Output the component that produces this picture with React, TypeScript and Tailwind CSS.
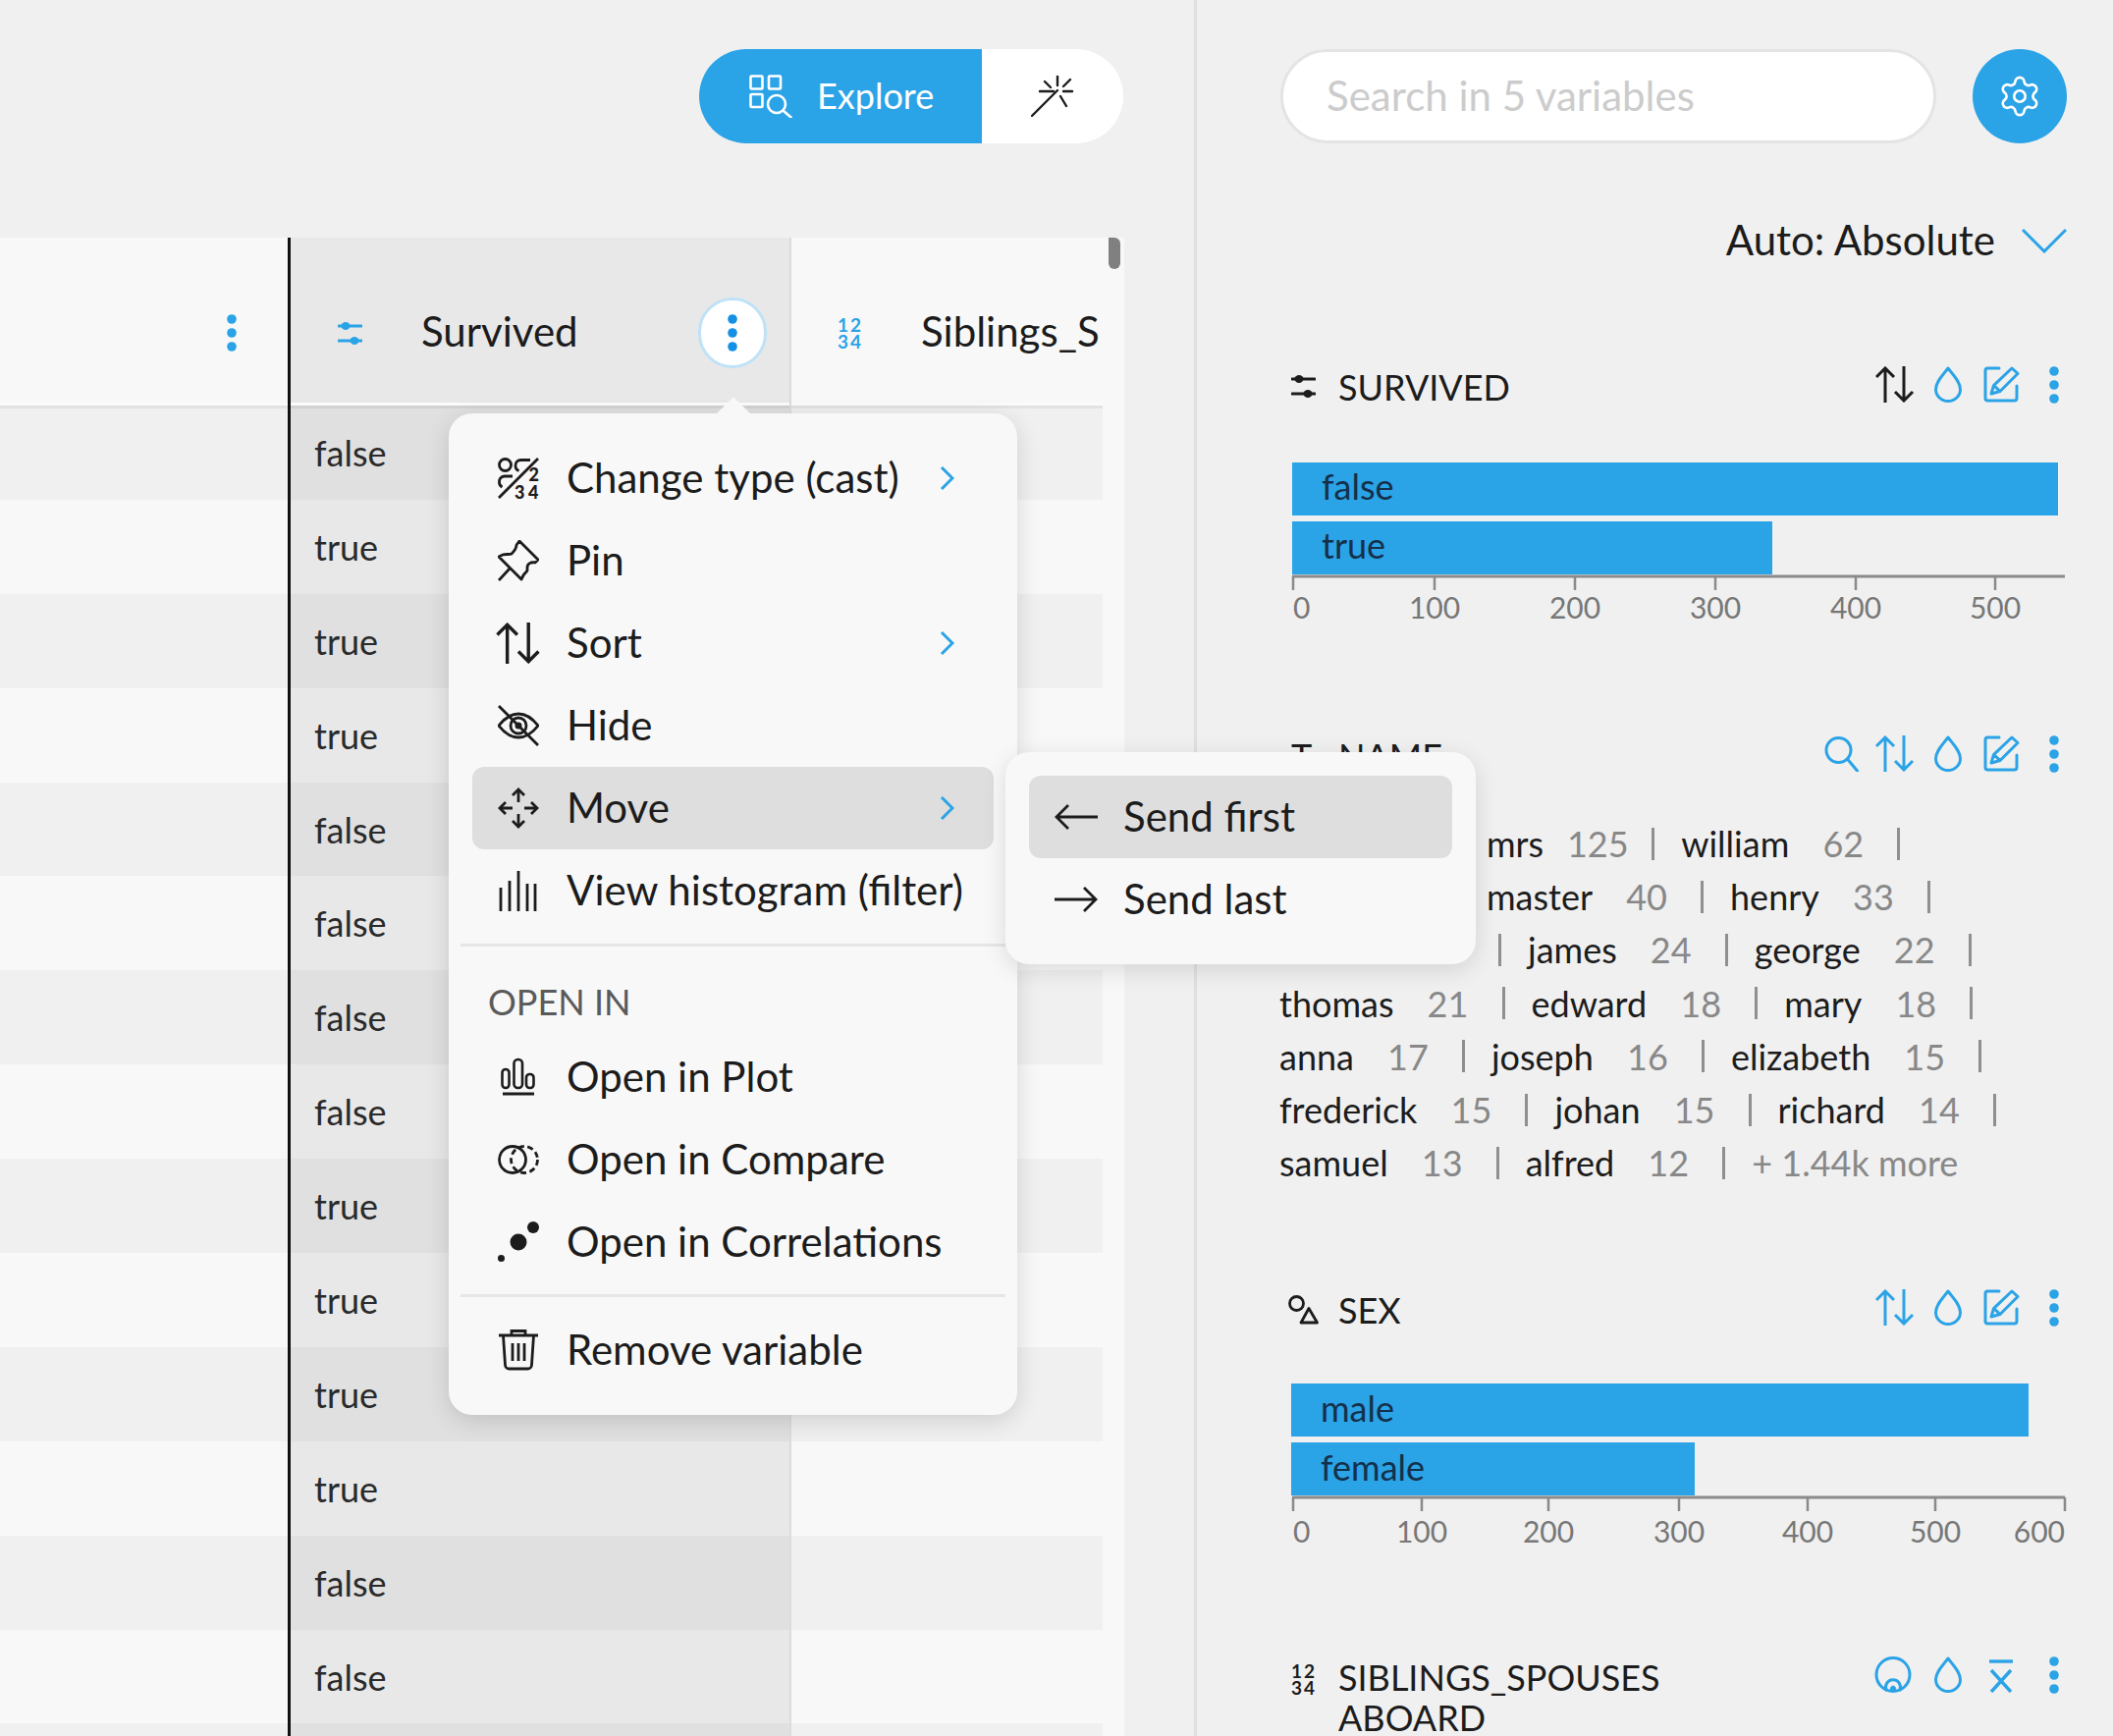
import { Settings } from "lucide-react"
import type { ReactNode } from "react"

const BLUE = "#2ba3e7"

function Dots({ color = BLUE }: { color?: string }) {
  return (
    <svg width="10" height="38" viewBox="0 0 10 38" fill={color}>
      <circle cx="5" cy="5" r="4.8" />
      <circle cx="5" cy="19" r="4.8" />
      <circle cx="5" cy="33" r="4.8" />
    </svg>
  )
}

function SortIcon({ color = "#1c1c1c", w = 40, h = 37 }: { color?: string; w?: number; h?: number }) {
  return (
    <svg width={w} height={h} viewBox="0 0 40 37" fill="none" stroke={color} strokeWidth="3">
      <path d="M10 37V2M1 11l9-9 9 9" />
      <path d="M29 0v35M20 26l9 9 9-9" />
    </svg>
  )
}

function DropIcon() {
  return (
    <svg width="28" height="37" viewBox="0 0 28 37" fill="none" stroke={BLUE} strokeWidth="3">
      <path d="M14 2C20 10 26.500 16 26.500 23.500A12.500 12 0 0 1 1.500 23.500C1.500 16 8 10 14 2Z" strokeLinejoin="round" />
    </svg>
  )
}

function EditIcon() {
  return (
    <svg width="37" height="37" viewBox="0 0 37 37" fill="none" stroke={BLUE} strokeWidth="3" strokeLinecap="round" strokeLinejoin="round">
      <path d="M16 2H4.500a2.500 2.500 0 0 0-2.500 2.500v28A2.500 2.500 0 0 0 4.500 35h27a2.500 2.500 0 0 0 2.500-2.500V20" />
      <path d="M8 28l2.500-8.500L29 2l6 5.500L17 25.500zM10.500 19.500l6.500 6" />
    </svg>
  )
}

function SearchIcon() {
  return (
    <svg width="36" height="37" viewBox="0 0 36 37" fill="none" stroke={BLUE} strokeWidth="3">
      <circle cx="14.500" cy="15" r="12.500" />
      <path d="M23.500 24l10 12" strokeLinecap="round" />
    </svg>
  )
}

function SliderIcon({ color }: { color: string }) {
  return (
    <svg width="25" height="25" viewBox="0 0 25 25" fill={color} stroke={color}>
      <path d="M1 5h23M1 20h23" strokeWidth="3" strokeLinecap="round" />
      <ellipse cx="8" cy="5" rx="4.500" ry="4" stroke="none" />
      <ellipse cx="17" cy="20" rx="4.500" ry="4" stroke="none" />
    </svg>
  )
}

function NumIcon({ color }: { color: string }) {
  return (
    <svg width="26" height="31" viewBox="0 0 26 31" fill={color} fontSize="19" fontWeight="700">
      <text x="0" y="14" letterSpacing="2">12</text>
      <text x="0" y="31" letterSpacing="2">34</text>
    </svg>
  )
}

function ShapesIcon() {
  return (
    <svg width="31" height="30" viewBox="0 0 31 30" fill="none" stroke="#1c1c1c" strokeWidth="2.800">
      <circle cx="8.500" cy="8.500" r="7" />
      <path d="M21 13.500L29.500 28H13z" strokeLinejoin="round" />
    </svg>
  )
}

function TargetIcon() {
  return (
    <svg width="38" height="37" viewBox="0 0 38 37" fill="none" stroke={BLUE} strokeWidth="3">
      <circle cx="19" cy="18.500" r="17" />
      <path d="M12.500 35a7.500 7.500 0 1 1 13 0" />
      <path d="M15.500 35.500a3.500 6 0 1 1 7 0z" fill={BLUE} stroke="none" />
    </svg>
  )
}

function MeanIcon() {
  return (
    <svg width="26" height="34" viewBox="0 0 26 34" fill="none" stroke={BLUE} strokeWidth="3.400">
      <path d="M1 2h24" />
      <path d="M3 11l20 22M23 11L3 33" />
    </svg>
  )
}

function ExploreIcon() {
  return (
    <svg width="44" height="44" viewBox="0 0 44 44" fill="none" stroke="#fff" strokeWidth="2.600">
      <rect x="1.500" y="1.500" width="12" height="13" rx="1" />
      <rect x="20" y="1.500" width="12" height="13" rx="1" />
      <rect x="1.500" y="20" width="12" height="13" rx="1" />
      <circle cx="28" cy="30" r="9" />
      <path d="M34.500 36.500l8 7" strokeLinecap="round" />
    </svg>
  )
}

function WandIcon() {
  return (
    <svg width="44" height="42" viewBox="0 0 44 42" fill="none" stroke="#1c1c1c" strokeWidth="2.400" strokeLinecap="round">
      <path d="M1 41l26-26" />
      <path d="M27 0v10M40 4l-7 7M42 16H33M36 31l-6-10M9 16h14M14 6l6 6" />
    </svg>
  )
}

function CastIcon() {
  return (
    <svg width="42" height="42" viewBox="0 0 42 42" fill="none" stroke="#1c1c1c" strokeWidth="2.800">
      <circle cx="7.500" cy="7.500" r="6" />
      <path d="M33 2.500H23.500a5.500 5.500 0 0 0-5.500 5.500 5.500 5.500 0 0 0 3.500 5.500" />
      <path d="M15 19H6.500A5.500 5.500 0 0 0 1.500 25a5.500 5.500 0 0 0 3 5" />
      <path d="M1 41L41 1" />
      <g fill="#1c1c1c" stroke="none" fontSize="18" fontWeight="900">
        <text x="31.500" y="24">2</text>
        <text x="17" y="41.500">3</text>
        <text x="31" y="41.500">4</text>
      </g>
    </svg>
  )
}

function PinIcon() {
  return (
    <svg width="42" height="42" viewBox="0 0 42 42" fill="none" stroke="#1c1c1c" strokeWidth="2.800" strokeLinejoin="round">
      <path d="M22 1L41 20L38 23C34 22 30 24 30 28L30 31C29 33 27 34 26 36L24 40L1 17L5 15C8 14 12 15 14 14C16 12 19 9 19 5Z" />
      <path d="M13 28L1 41" />
    </svg>
  )
}

function HideIcon() {
  return (
    <svg width="42" height="42" viewBox="0 0 42 42" fill="none" stroke="#1c1c1c" strokeWidth="2.800">
      <path d="M1 21C8 12 14 9 21 9C28 9 34 12 41 21C34 30 28 33 21 33C14 33 8 30 1 21Z" strokeLinejoin="round" />
      <circle cx="21" cy="21" r="8" />
      <circle cx="21" cy="21" r="3.500" fill="#1c1c1c" stroke="none" />
      <path d="M1 1l40 40" />
    </svg>
  )
}

function MoveIcon() {
  return (
    <svg width="42" height="42" viewBox="0 0 42 42" fill="none" stroke="#1c1c1c" strokeWidth="2.800">
      <path d="M21 2v13M21 27v13M2 21h13M27 21h13" />
      <path d="M15 8l6-6 6 6M15 34l6 6 6-6M8 15l-6 6 6 6M34 15l6 6-6 6" />
    </svg>
  )
}

function HistogramIcon() {
  return (
    <svg width="42" height="42" viewBox="0 0 42 42" fill="none" stroke="#1c1c1c" strokeWidth="2.800">
      <path d="M3 42V18M12 42V11M21 42V1M30 42V14M38 42V14" />
    </svg>
  )
}

function PlotIcon() {
  return (
    <svg width="42" height="42" viewBox="0 0 42 42" fill="none" stroke="#1c1c1c" strokeWidth="2.600">
      <rect x="4.500" y="13" width="7" height="19" rx="3.500" />
      <rect x="16.500" y="3" width="8.500" height="29" rx="4" />
      <rect x="29" y="18" width="7.500" height="14" rx="3.500" />
      <path d="M5 38h32" strokeWidth="3" />
    </svg>
  )
}

function CompareIcon() {
  return (
    <svg width="42" height="32" viewBox="0 0 42 32" fill="none" stroke="#1c1c1c" strokeWidth="2.800">
      <circle cx="15" cy="16" r="13.500" />
      <circle cx="27" cy="16" r="13.500" strokeDasharray="6 3.500" />
    </svg>
  )
}

function CorrelationIcon() {
  return (
    <svg width="42" height="42" viewBox="0 0 42 42" fill="#1c1c1c">
      <circle cx="21" cy="21" r="8.500" />
      <circle cx="36" cy="6" r="6" />
      <circle cx="3.500" cy="37.500" r="3.500" />
    </svg>
  )
}

function TrashIcon() {
  return (
    <svg width="42" height="42" viewBox="0 0 42 42" fill="none" stroke="#1c1c1c" strokeWidth="2.800">
      <path d="M1 6h40M14 6V1.500h14V6" />
      <path d="M5.500 6l2 30a4 4 0 0 0 4 4h19a4 4 0 0 0 4-4l2-30" />
      <path d="M15 14v18M21 14v18M27 14v18" />
    </svg>
  )
}

function ArrowIcon({ dir }: { dir: "left" | "right" }) {
  return (
    <svg width="44" height="28" viewBox="0 0 44 28" fill="none" stroke="#1c1c1c" strokeWidth="2.800">
      <path d={dir === "left" ? "M2 14h42M14 2L2 14l12 12" : "M0 14h42M30 2l12 12-12 12"} />
    </svg>
  )
}

function Chevron() {
  return (
    <svg width="15" height="26" viewBox="0 0 15 26" fill="none" stroke={BLUE} strokeWidth="3">
      <path d="M2 2l11 11L2 24" />
    </svg>
  )
}

function MenuItem({ icon, label, more, active }: { icon: ReactNode; label: string; more?: boolean; active?: boolean }) {
  return (
    <div className={`flex h-[84px] items-center rounded-[12px] pl-[24px] pr-[40px] ${active ? "bg-[#dedede]" : ""}`}>
      <span className="flex w-[46px] shrink-0 justify-center">{icon}</span>
      <span className="ml-[26px] pb-[2px] text-[42px] leading-none whitespace-nowrap text-[#1c1c1c]">{label}</span>
      {more && (
        <span className="ml-auto">
          <Chevron />
        </span>
      )}
    </div>
  )
}

type BarChartProps = {
  bars: { label: string; width: number }[]
  ticks: { label: string; x: number; anchor: "start" | "middle" | "end" }[]
  labelY: number
  barX: number
  textY: number
}

function BarChart({ bars, ticks, labelY, barX, textY }: BarChartProps) {
  return (
    <svg width="802" height="166" viewBox="0 0 802 166" className="block">
      {bars.map((bar, i) => (
        <g key={bar.label}>
          <rect x={barX} y={i * 60} width={bar.width} height="54" fill={BLUE} />
          <text x={barX + 30} y={i * 60 + textY} fontSize="36" fill="#14304a">
            {bar.label}
          </text>
        </g>
      ))}
      <path d="M13 116H800" stroke="#8a8a8a" strokeWidth="3" />
      {ticks.map((tick) => (
        <g key={tick.label}>
          <path d={`M${tick.x} 116V130`} stroke="#8a8a8a" strokeWidth="2.500" />
          <text x={tick.x} y={labelY} fontSize="30" textAnchor={tick.anchor} fill="#777">
            {tick.label}
          </text>
        </g>
      ))}
    </svg>
  )
}

function SectionHeader({ icon, title, actions }: { icon: ReactNode; title: string; actions: ReactNode }) {
  return (
    <div className="flex min-h-[43px] items-start justify-between pl-[12px]">
      <div className="flex items-start">
        <span className="mt-[8px] flex w-[48px] shrink-0">{icon}</span>
        <span className="mt-[1px] max-w-[450px] text-[36px] leading-[41px] text-[#1c1c1c]">{title}</span>
      </div>
      {actions}
    </div>
  )
}

function Actions({ children }: { children: ReactNode }) {
  return (
    <div className="flex items-start">
      {children}
      <span className="ml-[21px] mr-[-1px] flex h-[37px] w-[28px] items-center justify-center">
        <Dots />
      </span>
    </div>
  )
}

const SEP = <span className="h-[33px] w-[3px] bg-[#8f8f8f]" />

function Word({ word, count }: { word: string; count: number }) {
  return (
    <>
      <span className="text-[#1c1c1c]">{word}</span>
      <span className="w-[110px] text-center text-[#888]">{count}</span>
      {SEP}
      <span className="w-[27px]" />
    </>
  )
}

// the start of the first three rows lies under the open submenu
const wordRows: { offset: string; leadBar?: boolean; words: [string, number][]; more?: boolean }[] = [
  { offset: "ml-[211px]", words: [["mrs", 125], ["william", 62]] },
  { offset: "ml-[211px]", words: [["master", 40], ["henry", 33]] },
  { offset: "ml-[223px]", leadBar: true, words: [["james", 24], ["george", 22]] },
  { offset: "", words: [["thomas", 21], ["edward", 18], ["mary", 18]] },
  { offset: "", words: [["anna", 17], ["joseph", 16], ["elizabeth", 15]] },
  { offset: "", words: [["frederick", 15], ["johan", 15], ["richard", 14]] },
  { offset: "", words: [["samuel", 13], ["alfred", 12]], more: true },
]

const cells = ["false", "true", "true", "true", "false", "false", "false", "false", "true", "true", "true", "true", "false", "false", ""]

function Column({ className, tint, line, children, showText }: { className: string; tint: [string, string]; line: string; children: ReactNode; showText?: boolean }) {
  return (
    <div className={className}>
      {children}
      {cells.map((text, i) => (
        <div
          key={i}
          className={`flex h-[95.9px] items-center pl-[24px] text-[36px] text-[#2a2a2a] ${i === 0 ? `border-t-[3px] pb-[3px] ${line}` : ""} ${i % 2 === 0 ? tint[0] : tint[1]}`}
        >
          {showText ? text : ""}
        </div>
      ))}
    </div>
  )
}

export default function App() {
  return (
    <div className="relative flex h-[1768px] overflow-hidden bg-[#f0f0f0] [font-family:Lato,sans-serif]">
      {/* left: data table */}
      <div className="w-[1219px] shrink-0 border-r-[3px] border-[#e0e0e0]">
        <div className="flex h-[242px] justify-end pt-[50px] pr-[72px]">
          <div className="flex h-[96px] overflow-hidden rounded-full bg-white">
            <div className="flex w-[288px] items-center bg-[#2ba3e7] pl-[51px] text-[36px] text-white">
              <ExploreIcon />
              <span className="ml-[25px] pb-[2px]">Explore</span>
            </div>
            <div className="flex w-[144px] items-center pl-[50px]">
              <WandIcon />
            </div>
          </div>
        </div>

        <div className="relative flex w-[1145px]">
          <Column className="w-[296px] shrink-0 border-r-[3px] border-[#111]" tint={["bg-[#f0f0f0]", "bg-[#f8f8f8]"]} line="border-[#e2e2e2]">
            <div className="flex h-[171px] items-center justify-end border-b-[3px] border-[#fbfbfb] bg-[#f8f8f8] pt-[26px] pr-[52px]">
              <Dots />
            </div>
          </Column>
          <Column className="w-[510px] shrink-0 border-r-[2px] border-[#dcdcdc]" tint={["bg-[#e0e0e0]", "bg-[#e8e8e8]"]} line="border-[#d2d2d2]" showText>
            <div className="flex h-[171px] items-center border-b-[3px] border-[#fbfbfb] bg-[#e8e8e8] pt-[26px] pl-[48px]">
              <SliderIcon color={BLUE} />
              <span className="ml-[60px] pb-[3px] text-[42px] text-[#1c1c1c]">Survived</span>
              <span className="ml-auto mr-[23px] flex h-[72px] w-[70px] items-center justify-center rounded-full border-[3px] border-[#bfe2f7] bg-white">
                <Dots color="#1690e4" />
              </span>
            </div>
          </Column>
          <Column className="w-[317px] shrink-0" tint={["bg-[#f0f0f0]", "bg-[#f8f8f8]"]} line="border-[#e2e2e2]">
            <div className="flex h-[171px] items-center border-b-[3px] border-[#fbfbfb] bg-[#f8f8f8] pt-[26px] pl-[47px]">
              <NumIcon color={BLUE} />
              <span className="ml-[59px] pb-[3px] text-[42px] text-[#1c1c1c]">Siblings_S</span>
            </div>
          </Column>
          <div className="flex-1 bg-[#f8f8f8] pl-[6px]">
            <div className="h-[32px] w-[12px] rounded-b-[6px] rounded-tr-[6px] bg-[#808080]" />
          </div>
        </div>
      </div>

      {/* right: variable summaries */}
      <div className="flex-1 pt-[50px] pl-[84px] pr-[49px]">
        <div className="flex items-center justify-between">
          <div className="ml-[1px] flex h-[96px] w-[668px] items-center rounded-full border-[3px] border-[#e4e4e4] bg-white pb-[2px] pl-[44px] text-[42px] text-[#cccccc]">
            Search in 5 variables
          </div>
          <div className="flex h-[96px] w-[96px] items-center justify-center rounded-full bg-[#2ba3e7]">
            <Settings size={46} color="#fff" strokeWidth={1.4} />
          </div>
        </div>

        <div className="mt-[71px] flex h-[54px] items-center justify-end">
          <span className="text-[42px] text-[#1c1c1c]">Auto: Absolute</span>
          <svg width="46" height="25" viewBox="0 0 46 25" fill="none" stroke={BLUE} strokeWidth="3" className="ml-[27px] mt-[2px]">
            <path d="M1 1l22 22L45 1" />
          </svg>
        </div>

        <div className="mt-[102px]">
          <SectionHeader
            icon={<SliderIcon color="#1c1c1c" />}
            title="SURVIVED"
            actions={
              <Actions>
                <SortIcon />
                <span className="ml-[20px]"><DropIcon /></span>
                <span className="ml-[22px]"><EditIcon /></span>
              </Actions>
            }
          />
          <div className="mt-[55px]">
            <BarChart
              barX={13}
              textY={38}
              labelY={159}
              bars={[
                { label: "false", width: 780 },
                { label: "true", width: 489 },
              ]}
              ticks={[
                { label: "0", x: 14, anchor: "start" },
                { label: "100", x: 158, anchor: "middle" },
                { label: "200", x: 301, anchor: "middle" },
                { label: "300", x: 444, anchor: "middle" },
                { label: "400", x: 587, anchor: "middle" },
                { label: "500", x: 729, anchor: "middle" },
              ]}
            />
          </div>
        </div>

        <div className="mt-[112px]">
          <SectionHeader
            icon={<span className="mt-[-7px] text-[36px] leading-[41px] text-[#1c1c1c]">T</span>}
            title="NAME"
            actions={
              <Actions>
                <span className="mr-[16px]"><SearchIcon /></span>
                <SortIcon color={BLUE} />
                <span className="ml-[20px]"><DropIcon /></span>
                <span className="ml-[22px]"><EditIcon /></span>
              </Actions>
            }
          />
          <div className="mt-[40px] text-[36px]">
            {wordRows.map((row, i) => (
              <div key={i} className={`flex h-[54.2px] items-center whitespace-nowrap ${row.offset}`}>
                {row.leadBar && (
                  <>
                    {SEP}
                    <span className="w-[27px]" />
                  </>
                )}
                {row.words.map(([word, count]) => (
                  <Word key={word} word={word} count={count} />
                ))}
                {row.more && <span className="text-[#888]">+ 1.44k more</span>}
              </div>
            ))}
          </div>
        </div>

        <div className="mt-[102px]">
          <SectionHeader
            icon={<span className="ml-[-3px] mt-[-2px]"><ShapesIcon /></span>}
            title="SEX"
            actions={
              <Actions>
                <SortIcon color={BLUE} />
                <span className="ml-[20px]"><DropIcon /></span>
                <span className="ml-[22px]"><EditIcon /></span>
              </Actions>
            }
          />
          <div className="mt-[53px]">
            <BarChart
              barX={12}
              textY={39}
              labelY={162}
              bars={[
                { label: "male", width: 751 },
                { label: "female", width: 411 },
              ]}
              ticks={[
                { label: "0", x: 14, anchor: "start" },
                { label: "100", x: 145, anchor: "middle" },
                { label: "200", x: 274, anchor: "middle" },
                { label: "300", x: 407, anchor: "middle" },
                { label: "400", x: 538, anchor: "middle" },
                { label: "500", x: 668, anchor: "middle" },
                { label: "600", x: 800, anchor: "end" },
              ]}
            />
          </div>
        </div>

        <div className="mt-[112px]">
          <SectionHeader
            icon={<NumIcon color="#1c1c1c" />}
            title="SIBLINGS_SPOUSES ABOARD"
            actions={
              <Actions>
                <TargetIcon />
                <span className="ml-[23px]"><DropIcon /></span>
                <span className="ml-[27px] mr-[6px] mt-[3px]"><MeanIcon /></span>
              </Actions>
            }
          />
        </div>
      </div>

      {/* column menu, open over the table */}
      <div className="absolute left-[457px] top-[421px] w-[579px] rounded-[24px] bg-[#f8f8f8] p-[24px] shadow-[0_6px_24px_rgba(0,0,0,0.14)]">
        <div className="absolute left-[278px] top-[-12px] h-[24px] w-[24px] rotate-45 rounded-tl-[3px] bg-[#f8f8f8]" />
        <MenuItem icon={<CastIcon />} label="Change type (cast)" more />
        <MenuItem icon={<PinIcon />} label="Pin" />
        <MenuItem icon={<SortIcon w={46} h={42} />} label="Sort" more />
        <MenuItem icon={<HideIcon />} label="Hide" />
        <MenuItem icon={<MoveIcon />} label="Move" more active />
        <MenuItem icon={<HistogramIcon />} label="View histogram (filter)" />
        <div className="mx-[-12px] mt-[12px] h-[3px] bg-[#e6e6e6]" />
        <div className="pl-[16px] pt-[35px] pb-[14px] text-[36px] leading-[42px] text-[#5a5a5a]">OPEN IN</div>
        <MenuItem icon={<PlotIcon />} label="Open in Plot" />
        <MenuItem icon={<CompareIcon />} label="Open in Compare" />
        <MenuItem icon={<CorrelationIcon />} label="Open in Correlations" />
        <div className="mx-[-12px] mt-[11px] mb-[12px] h-[3px] bg-[#e6e6e6]" />
        <MenuItem icon={<TrashIcon />} label="Remove variable" />

        <div className="absolute left-[567px] top-[345px] w-[479px] rounded-[24px] bg-[#f8f8f8] p-[24px] shadow-[0_6px_24px_rgba(0,0,0,0.12)]">
          <div className="flex h-[84px] items-center rounded-[12px] bg-[#dedede] pl-[26px] pb-[1px] text-[42px] text-[#1c1c1c]">
            <ArrowIcon dir="left" />
            <span className="ml-[26px]">Send first</span>
          </div>
          <div className="flex h-[84px] items-center pl-[26px] pb-[1px] text-[42px] text-[#1c1c1c]">
            <ArrowIcon dir="right" />
            <span className="ml-[26px]">Send last</span>
          </div>
        </div>
      </div>
    </div>
  )
}
